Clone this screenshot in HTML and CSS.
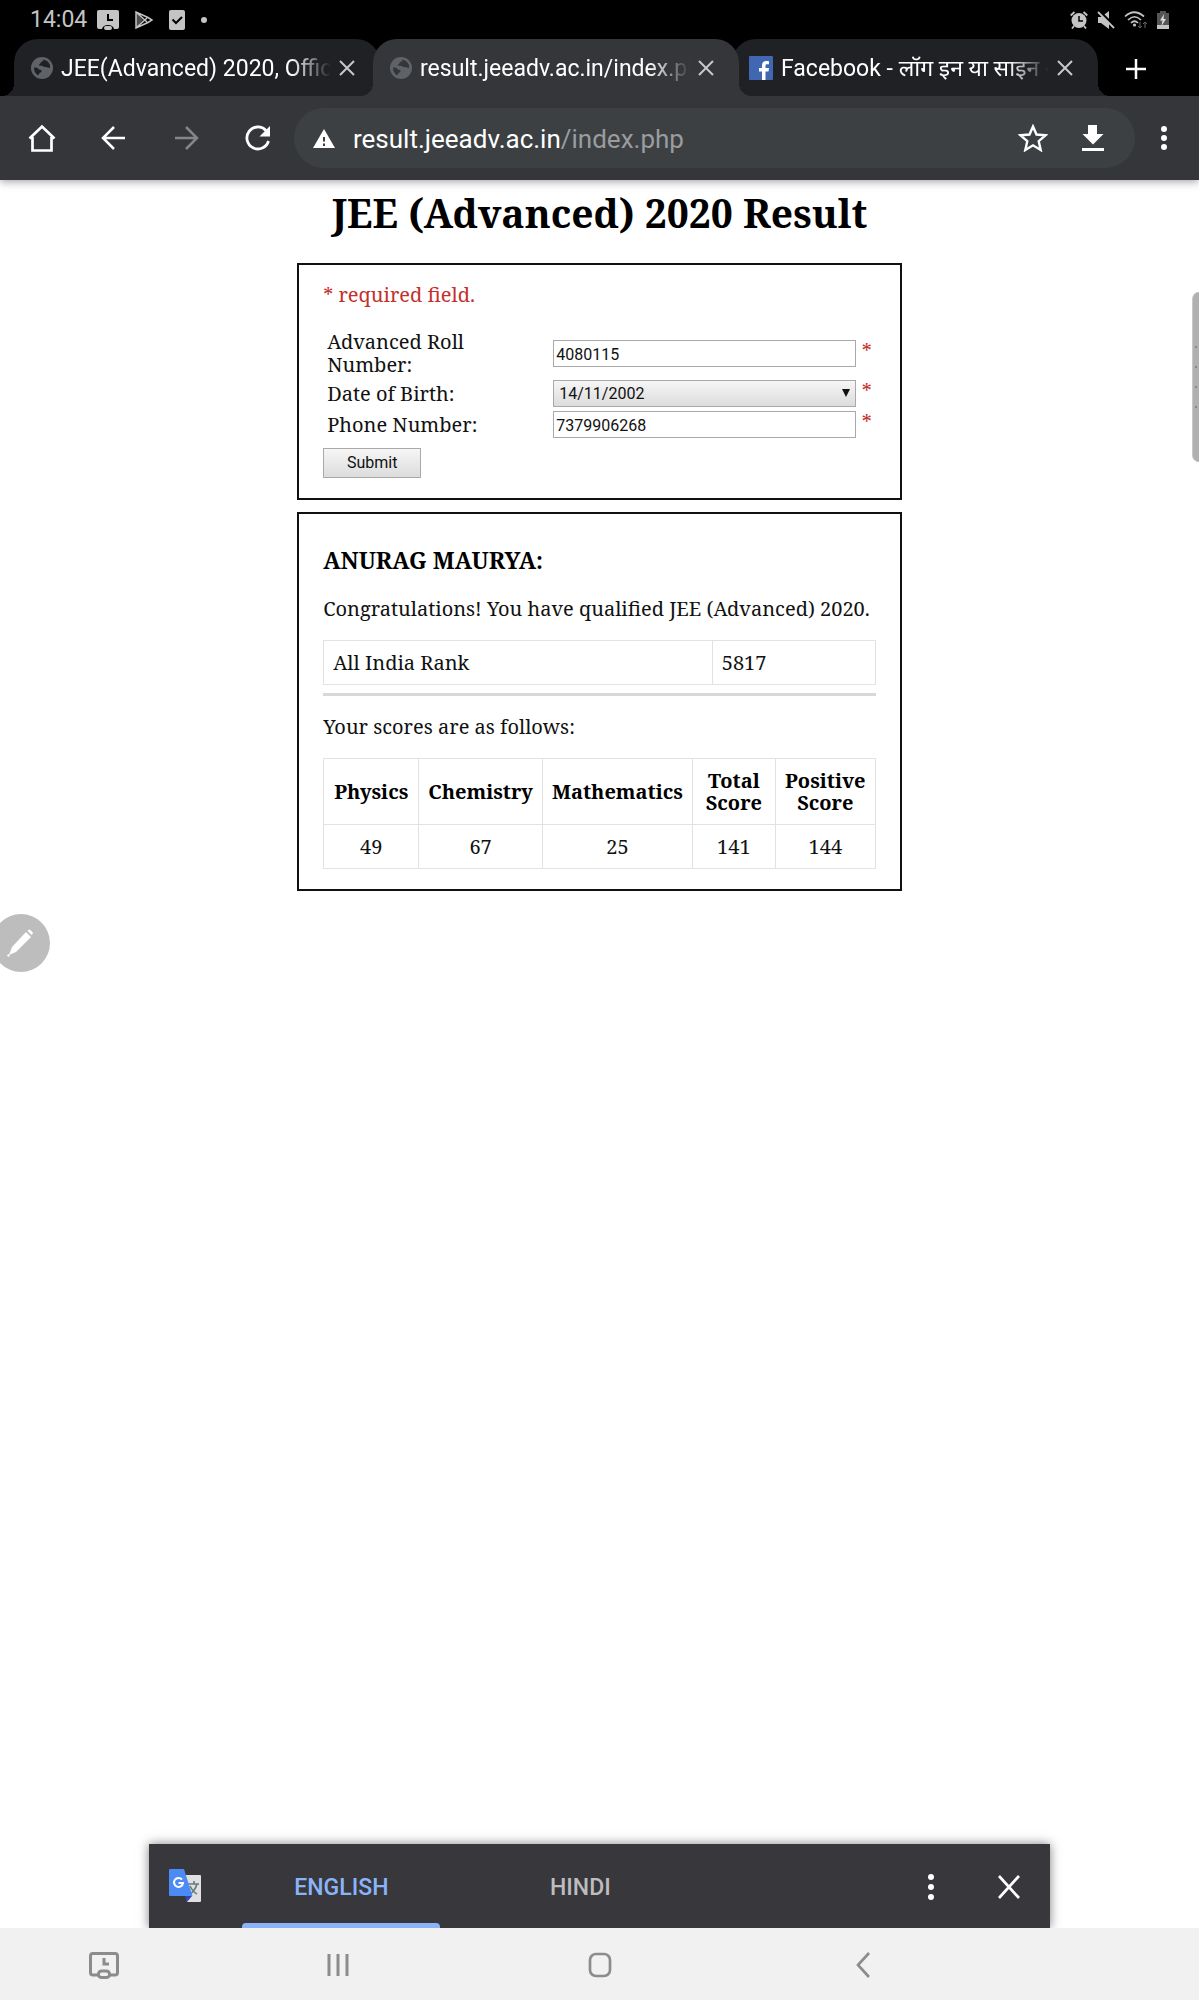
FILE: index.html
```html
<!DOCTYPE html>
<html lang="en">
<head>
<meta charset="utf-8">
<meta name="viewport" content="width=device-width">
<title>JEE (Advanced) 2020 Result</title>
<link rel="stylesheet" href="styles.css">
</head>
<body>
<svg class="sprite" aria-hidden="true">
  <symbol id="globe" viewBox="0 0 22 22"><circle cx="11" cy="11" r="11" fill="#5f6368"/><path d="M3 10.500c2.500 0 4 .2 4.500 1.500s2.500.2 3 1.500-.6 2-1.800 2.400-.2 2.600-2.200 2.100A9 9 0 0 1 3 10.500ZM12 2.500c1 1.200-.5 2-1.800 2.600s-.2 1.600-1.700 2.100-.6 1.800 1.500 1.500 2.600 1.200 4.500 1.400 2.500.9 4.500.9V8a9 9 0 0 0-7-5.500Z" fill="var(--tab)"/></symbol>
  <symbol id="cross" viewBox="0 0 16 16"><path d="m1 1 14 14M15 1 1 15" fill="none" stroke="currentColor" stroke-width="2"/></symbol>
  <symbol id="dots" viewBox="0 0 6 24"><circle cx="3" cy="3" r="3"/><circle cx="3" cy="12" r="3"/><circle cx="3" cy="21" r="3"/></symbol>
</svg>

<header class="browser">
  <div class="status">
    <span class="clock">14:04</span>
    <div class="notices">
      <svg width="22" height="20" viewBox="0 0 22 20"><path fill="currentColor" fill-rule="evenodd" d="M2 0h18q2 0 2 2v15q0 2-2 2h-3q-1-4-6-4t-6 4H2q-2 0-2-2V2q0-2 2-2Zm8 4v7h6V9h-4V4Z"/><rect x="7" y="16" width="8" height="4" rx="2" fill="currentColor"/></svg>
      <svg width="18" height="18" viewBox="0 0 18 18"><path d="M1 1v16l12-5.500L17 9l-4-2.500ZM1 1l11 10M1 17 12 7" fill="none" stroke="currentColor" stroke-width="1.500"/><path d="M1 1v16l7-8Z" fill="currentColor" opacity=".4"/></svg>
      <svg width="16" height="20" viewBox="0 0 16 20"><rect width="16" height="20" rx="2" fill="currentColor"/><path d="m3.500 9.500 3.500 3.500 6-6" fill="none" stroke="#000" stroke-width="2"/></svg>
      <svg width="6" height="6" viewBox="0 0 6 6"><circle cx="3" cy="3" r="3" fill="currentColor"/></svg>
    </div>
    <span class="spacer"></span>
    <div class="signals">
      <svg width="18" height="18" viewBox="0 0 18 18"><circle cx="9" cy="9.500" r="7.500" fill="currentColor"/><path d="M9 5v5h4" fill="none" stroke="#000" stroke-width="1.500"/><path d="M.7 4.500 4.500 1M17.300 4.500 13.500 1M4 15l-2 2.500M14 15l2 2.500" stroke="currentColor" stroke-width="1.800"/></svg>
      <svg width="18" height="18" viewBox="0 0 18 18"><path d="M1 6h3l8-6v18l-8-6H1Z" fill="currentColor"/><path d="m2 0 16 16" stroke="#000" stroke-width="3"/><path d="m1 1 16 16" stroke="currentColor" stroke-width="1.800"/></svg>
      <svg width="24" height="18" viewBox="0 0 24 18"><g fill="none" stroke="currentColor" stroke-width="1.700"><path d="M1 5.500q9-8.500 19 0M4 9q6.500-6.500 13 0M7 12q3.500-3.500 7 0"/></g><circle cx="10.500" cy="14" r="1.600" fill="currentColor"/><path d="M16 11v6m-2-2 2 2 2-2M21 17v-6m-2 2 2-2 2 2" fill="none" stroke="#666"/></svg>
      <svg width="12" height="18" viewBox="0 0 12 18"><path d="M3 0h6v2h3v16H0V2h3Z" fill="#555"/><path d="M0 14h12v4H0Z" fill="currentColor"/><path d="M7 3 3 9.500h2.500L4.500 15 9 8H6.500Z" fill="#ddd"/></svg>
    </div>
  </div>

  <nav class="tabs" aria-label="Open tabs">
    <div class="tab">
      <svg class="favicon" width="22" height="22"><use href="#globe"/></svg>
      <a class="tab-title" href="#">JEE(Advanced) 2020, Official Website</a>
      <button class="tab-close" aria-label="Close tab"><svg width="16" height="16"><use href="#cross"/></svg></button>
    </div>
    <div class="tab tab-active">
      <svg class="favicon" width="22" height="22"><use href="#globe"/></svg>
      <a class="tab-title" href="#" aria-current="page">result.jeeadv.ac.in/index.php</a>
      <button class="tab-close" aria-label="Close tab"><svg width="16" height="16"><use href="#cross"/></svg></button>
    </div>
    <div class="tab">
      <svg class="favicon" width="24" height="24" viewBox="0 0 24 24"><rect width="24" height="24" rx="1" fill="#4267b2"/><path d="M13 24v-8.500h-3V12h3V9.500C13 6.200 15 5 17.500 5c1.200 0 2 .1 2.500.2v3h-1.800c-1.400 0-1.700.7-1.700 1.700V12H20l-.5 3.500h-3V24Z" fill="#fff"/></svg>
      <a class="tab-title" href="#">Facebook - लॉग इन या साइन अप करें</a>
      <button class="tab-close" aria-label="Close tab"><svg width="16" height="16"><use href="#cross"/></svg></button>
    </div>
    <button class="new-tab" aria-label="New tab"><svg width="22" height="22" viewBox="0 0 22 22"><path d="M11 1v20M1 11h20" stroke="currentColor" stroke-width="2.500"/></svg></button>
  </nav>

  <div class="toolbar">
    <button class="tool" aria-label="Home"><svg width="28" height="28" viewBox="0 0 28 28"><path d="M1.500 14.500 14 2.500l12.500 12M4.500 13v13.500h19V13" fill="none" stroke="currentColor" stroke-width="2.700"/></svg></button>
    <button class="tool" aria-label="Back"><svg width="26" height="26" viewBox="0 0 26 26"><path d="M24 13H2M13 2 2 13l11 11" fill="none" stroke="currentColor" stroke-width="2.500"/></svg></button>
    <button class="tool tool-off" aria-label="Forward" disabled><svg width="26" height="26" viewBox="0 0 26 26"><path d="M2 13h22M13 2l11 11-11 11" fill="none" stroke="currentColor" stroke-width="2.500"/></svg></button>
    <button class="tool" aria-label="Reload"><svg width="26" height="26" viewBox="0 0 26 26"><path d="M23.500 16A11 11 0 1 1 21 5.500" fill="none" stroke="currentColor" stroke-width="2.800"/><path d="M25 1v10.500H14.500Z" fill="currentColor"/></svg></button>
    <div class="address">
      <svg width="22" height="19" viewBox="0 0 22 19"><path d="M11 0 22 19H0Z" fill="currentColor"/><path d="M11 8v4.500M11 14.500V17" stroke="#3c4043" stroke-width="2"/></svg>
      <a class="url" href="#">result.jeeadv.ac.in<span class="url-path">/index.php</span></a>
      <button class="tool star" aria-label="Bookmark"><svg width="30" height="28" viewBox="0 0 30 28"><path d="m15 2.500 3.500 8 9 .8-6.800 5.900 2 8.800L15 21.300 7.300 26l2-8.800-6.800-5.900 9-.8Z" fill="none" stroke="currentColor" stroke-width="2.400"/></svg></button>
      <button class="tool" aria-label="Download"><svg width="22" height="26" viewBox="0 0 22 26"><path d="M6 0h9v9h6.500L11 19.500.5 9H6ZM0 23h22v3H0Z" fill="currentColor"/></svg></button>
    </div>
    <button class="tool" aria-label="Menu"><svg width="6" height="24" fill="currentColor"><use href="#dots"/></svg></button>
  </div>
</header>

<main class="page">
  <h1>JEE (Advanced) 2020 Result</h1>

  <form class="panel">
    <p class="required">* required field.</p>
    <div class="fields">
      <label for="roll">Advanced Roll Number:</label>
      <input id="roll" type="text" value="4080115"><span class="mark">*</span>
      <label for="dob">Date of Birth:</label>
      <span class="picker"><select id="dob"><option>14/11/2002</option></select></span><span class="mark">*</span>
      <label for="phone">Phone Number:</label>
      <input id="phone" type="text" value="7379906268"><span class="mark">*</span>
    </div>
    <button class="submit" type="submit">Submit</button>
  </form>

  <section class="panel result">
    <h2>ANURAG MAURYA:</h2>
    <p>Congratulations! You have qualified JEE (Advanced) 2020.</p>
    <table class="rank">
      <tr><td>All India Rank</td><td>5817</td></tr>
    </table>
    <hr>
    <p>Your scores are as follows:</p>
    <table class="scores">
      <thead><tr><th>Physics</th><th>Chemistry</th><th>Mathematics</th><th>Total Score</th><th>Positive Score</th></tr></thead>
      <tbody><tr><td>49</td><td>67</td><td>25</td><td>141</td><td>144</td></tr></tbody>
    </table>
  </section>
</main>

<footer class="bottom">
  <div class="translate">
    <svg class="translate-logo" width="34" height="34" viewBox="0 0 34 34"><path d="M15 6h17q1 0 1 1v25q0 1-1 1H19Z" fill="#e0e0e0"/><path d="M20 15h11M26 12v3M29 15q-2 7-8 11M22 17q3 6 7 8" fill="none" stroke="#607d7b" stroke-width="1.600"/><path d="M17 27h7l-5 6Z" fill="#3044b5"/><path d="M2 0h14l8.500 27H2q-1 0-1-1V1q0-1 1-1Z" fill="#4c8bf5"/><path d="M14 10.500A4.500 4.500 0 1 0 15 14h-4.500" fill="none" stroke="#fff" stroke-width="2"/></svg>
    <button class="lang lang-on">ENGLISH</button>
    <button class="lang">HINDI</button>
    <span class="spacer"></span>
    <button class="tool" aria-label="Translate options"><svg width="6" height="26" viewBox="0 0 6 26" fill="currentColor"><circle cx="3" cy="3" r="3"/><circle cx="3" cy="13" r="3"/><circle cx="3" cy="23" r="3"/></svg></button>
    <button class="tool" aria-label="Close"><svg width="22" height="24" viewBox="0 0 22 24"><path d="m1 1 20 22M21 1 1 23" stroke="currentColor" stroke-width="2.700"/></svg></button>
  </div>
  <nav class="system" aria-label="System">
    <button aria-label="Screen pin"><svg width="30" height="27" viewBox="0 0 30 27"><g fill="none" stroke="currentColor" stroke-width="3"><path d="M9 23H4q-2.500 0-2.500-2.500V4Q1.500 1.500 4 1.500h22q2.500 0 2.500 2.500v16.500Q28.500 23 26 23h-5"/><rect x="9.500" y="19" width="11" height="6.500" rx="3"/><path d="M15 6v6h5"/></g></svg></button>
    <button aria-label="Recent apps"><svg width="22" height="24" viewBox="0 0 22 24"><path d="M2 1v22M11 1v22M20 1v22" stroke="currentColor" stroke-width="3"/></svg></button>
    <button aria-label="Home screen"><svg width="26" height="28" viewBox="0 0 26 28"><rect x="3" y="3" width="20" height="22" rx="6" fill="none" stroke="currentColor" stroke-width="2.700"/></svg></button>
    <button aria-label="Go back"><svg width="14" height="26" viewBox="0 0 14 26"><path d="M13 1 2 13l11 12" fill="none" stroke="currentColor" stroke-width="2.700"/></svg></button>
  </nav>
</footer>

<div class="edge-handle"><i></i><i></i><i></i><i></i></div>
<button class="pen" aria-label="Pen menu"><svg width="28" height="28" viewBox="0 0 28 28" fill="#fff"><path d="m19 3 5 5L9 23l-7 3 3-8Z"/><path d="m20.500 1.700 1.500-1.200q1 0 2.500 1.500T26 4.500L24.500 6Z"/><circle cx="1.500" cy="26.500" r="1.200"/></svg></button>
</body>
</html>
```
FILE: styles.css
```css
* { box-sizing: border-box; }

body {
  position: relative;
  display: flex;
  flex-direction: column;
  min-height: 100vh;
  margin: 0;
  background: #fff;
  color: #111;
  font: 20px/22px "Noto Serif", "DejaVu Serif Condensed", "DejaVu Serif", serif;
  overflow-x: hidden;
}

button {
  margin: 0;
  padding: 0;
  border: 0;
  background: none;
  color: inherit;
}

a { color: inherit; text-decoration: none; }
svg { display: block; flex: none; }
.sprite { position: absolute; width: 0; height: 0; }
.spacer { flex: 1; }

/* Browser chrome */
.browser {
  background: #000;
  color: #fff;
  font-family: Roboto, "Noto Sans", sans-serif;
  box-shadow: 0 2px 8px rgba(0, 0, 0, .35);
}

.status {
  display: flex;
  align-items: center;
  gap: 10px;
  height: 39px;
  padding: 0 30px;
  color: #c4c4c4;
}

.clock { font-size: 23px; }
.notices, .signals { display: flex; align-items: center; }
.notices { gap: 16px; }
.signals { gap: 9px; }

.tabs {
  display: flex;
  height: 57px;
  padding-left: 14px;
}

.tab {
  --tab: #202124;
  position: relative;
  z-index: 0;
  display: flex;
  flex: 0 1 359px;
  align-items: center;
  gap: 8px;
  min-width: 0;
  padding: 0 18px 0 17px;
}

.tab::before,
.tab::after {
  content: "";
  position: absolute;
  z-index: -1;
}

.tab::before {
  inset: 0 -7px 0 0;
  border-radius: 24px 24px 0 0;
  background: var(--tab);
}

/* curved feet on both sides of the tab */
.tab::after {
  inset: auto -19px 0 -12px;
  height: 12px;
  background:
    radial-gradient(circle at 0 0, transparent 12px, var(--tab) 12px) left / 12px 12px no-repeat,
    radial-gradient(circle at 100% 0, transparent 12px, var(--tab) 12px) right / 12px 12px no-repeat;
}

.tab-active { --tab: #35363a; z-index: 1; }

.tab-title {
  flex: 1;
  min-width: 0;
  padding-top: 2px;
  overflow: hidden;
  font-size: 23px;
  line-height: 40px;
  white-space: nowrap;
  -webkit-mask: linear-gradient(90deg, #000 85%, transparent);
  mask: linear-gradient(90deg, #000 85%, transparent);
}

.tab-close { color: #c8c8c8; }
.new-tab { margin-left: 34px; padding-top: 3px; }

.toolbar {
  display: flex;
  align-items: center;
  height: 84px;
  padding: 0 6px;
  background: #35363a;
}

.tool {
  display: flex;
  flex: none;
  align-items: center;
  justify-content: center;
  width: 72px;
  height: 60px;
}

.tool-off { color: #85868a; }

.address {
  display: flex;
  flex: 1;
  align-items: center;
  gap: 18px;
  min-width: 0;
  height: 60px;
  padding-left: 19px;
  border-radius: 30px;
  background: #3c4043;
}

.toolbar > .tool:last-child { width: 58px; }

.url { flex: 1; min-width: 0; padding-top: 2px; font-size: 26px; line-height: 32px; }
.url-path { color: #9a9c9e; }
.address .tool { width: 60px; }
.address .star { margin-right: -30px; }
.address .tool:last-child { width: 84px; }

/* Result page */
.page {
  flex: 1;
  width: calc(50% + 5px);
  min-width: 560px;
  margin: 0 auto;
}

h1 {
  margin: 11px 0 29px;
  color: #000;
  font-size: 39px;
  line-height: 43px;
  text-align: center;
  white-space: nowrap;
}

.panel {
  margin-bottom: 12px;
  padding: 19px 24px 20px;
  border: 2px solid #111;
}

.required { margin: 0 0 24px; color: #c4302b; }

.fields {
  display: grid;
  grid-template-columns: 222px 1fr 16px;
  gap: 4px;
  align-items: center;
  padding-left: 4px;
}

.fields label { padding-right: 60px; line-height: 23px; }

.fields input,
.fields select,
.submit {
  font: 16px/20px Roboto, sans-serif;
  color: #111;
}

.fields input {
  width: 100%;
  height: 27px;
  margin: 0;
  padding: 3px 2px 1px;
  border: 1px solid #a9a9a9;
}

.fields select {
  appearance: none;
  width: 100%;
  height: 27px;
  padding: 1px 5px 0;
  border: 1px solid #a9a9a9;
  border-radius: 0;
  background: linear-gradient(#f6f6f6, #dcdcdc);
}

.picker { position: relative; display: flex; }

.picker::after {
  content: "";
  position: absolute;
  top: 9px;
  right: 6px;
  border: solid transparent;
  border-width: 8px 4px 0;
  border-top-color: #111;
}

.mark { padding: 0 0 5px 2px; color: #c4302b; }

.submit {
  width: 98px;
  height: 30px;
  margin: 10px 0 0;
  border: 1px solid #a9a9a9;
  background: linear-gradient(#f6f6f6, #dcdcdc);
}

.result { padding-top: 34px; }

h2 { margin: 0 0 25px; color: #000; font-size: 23px; line-height: 25px; }
.result p { margin: 0 0 20px; white-space: nowrap; }

table { width: 100%; border-collapse: collapse; }
th, td { padding: 11px 9px 10px; border: 1px solid #e2e2e2; }
th { color: #000; }
.rank td:last-child { width: 163px; }
.scores { text-align: center; }
.scores th:first-child { width: 95px; }
.scores th:nth-child(4) { width: 83px; }

hr { margin: 8px 0 20px; border: 0; border-top: 3px solid #d8d8d8; }

/* Translate bar and system navigation */
.bottom { font-family: Roboto, sans-serif; }

.translate {
  display: flex;
  align-items: center;
  width: calc(75% + 1px);
  height: 84px;
  margin: 0 auto;
  padding: 0 2px 0 19px;
  background: #38373c;
  color: #fff;
  box-shadow: 0 0 10px rgba(0, 0, 0, .5);
}

.lang {
  width: 198px;
  height: 84px;
  padding-top: 3px;
  color: #bdbdbd;
  font: 500 23px/26px Roboto, sans-serif;
}

.translate-logo { margin-right: 40px; }
.lang-on { position: relative; margin-right: 41px; color: #8ab4f8; }

.lang-on::after {
  content: "";
  position: absolute;
  inset: auto 0 0;
  height: 5px;
  border-radius: 4px 4px 0 0;
  background: #8ab4f8;
}

.translate .tool { width: 78px; padding-top: 2px; }

.system {
  position: relative;
  display: grid;
  grid-template-columns: 207fr 261fr 263fr 263fr 205fr;
  height: 72px;
  padding-top: 2px;
  background: #f1f1f1;
  color: #8c8c8c;
}

.system button { display: grid; place-items: center; }

/* Floating overlays */
.edge-handle {
  position: absolute;
  top: 292px;
  right: 0;
  display: flex;
  flex-direction: column;
  align-items: center;
  justify-content: center;
  gap: 18px;
  width: 7px;
  height: 170px;
  border-left: 1px solid #c8c8c8;
  border-radius: 8px 0 0 8px;
  background: #b0b0b0;
}

.edge-handle i { width: 2px; height: 2px; background: #888; }

.pen {
  position: absolute;
  top: 914px;
  left: -8px;
  display: grid;
  place-items: center;
  width: 58px;
  height: 58px;
  border-radius: 50%;
  background: #bdbdbd;
}
```
